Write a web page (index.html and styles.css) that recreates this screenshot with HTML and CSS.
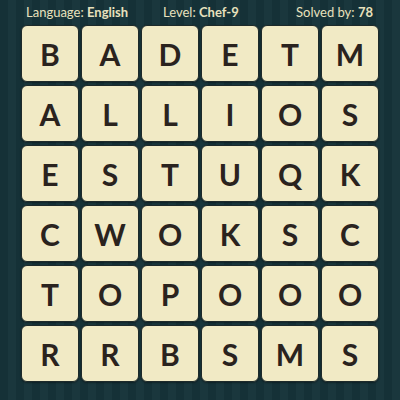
FILE: index.html
```html
<!DOCTYPE html>
<html>
<head>
<meta charset="utf-8">
<link rel="stylesheet" href="styles.css">
</head>
<body>
<div class="page">
  <div class="header">
    <span class="info">Language: <b>English</b></span>
    <span class="info">Level: <b>Chef-9</b></span>
    <span class="info right">Solved by: <b>78</b></span>
  </div>
  <div class="grid">
    <div class="tile">B</div><div class="tile">A</div><div class="tile">D</div><div class="tile">E</div><div class="tile">T</div><div class="tile">M</div>
    <div class="tile">A</div><div class="tile">L</div><div class="tile">L</div><div class="tile">I</div><div class="tile">O</div><div class="tile">S</div>
    <div class="tile">E</div><div class="tile">S</div><div class="tile">T</div><div class="tile">U</div><div class="tile">Q</div><div class="tile">K</div>
    <div class="tile">C</div><div class="tile">W</div><div class="tile">O</div><div class="tile">K</div><div class="tile">S</div><div class="tile">C</div>
    <div class="tile">T</div><div class="tile">O</div><div class="tile">P</div><div class="tile">O</div><div class="tile">O</div><div class="tile">O</div>
    <div class="tile">R</div><div class="tile">R</div><div class="tile">B</div><div class="tile">S</div><div class="tile">M</div><div class="tile">S</div>
  </div>
</div>
</body>
</html>
```
FILE: styles.css
```css
html, body {
  margin: 0;
  padding: 0;
}
body {
  width: 400px;
  height: 400px;
  overflow: hidden;
  background-color: #163238;
  background-image: repeating-linear-gradient(90deg, #153137 0px, #153137 8px, #1a373d 8px, #1a373d 16px);
  font-family: Lato, "Open Sans", sans-serif;
}
.page {
  display: flex;
  flex-direction: column;
}
.header {
  height: 24px;
  display: grid;
  grid-template-columns: 137px 1fr auto;
  align-items: center;
  padding: 0 27px 0 26px;
  color: #e8e1bd;
  font-size: 13px;
}
.info b {
  font-weight: 700;
}
.grid {
  margin: 1px 0 0 21px;
  display: grid;
  grid-template-columns: repeat(6, 58px);
  grid-auto-rows: 57px;
  gap: 2px 2px;
  row-gap: 3px;
}
.tile {
  box-sizing: border-box;
  background: #f1eac5;
  border: 1px solid #1e2a2a;
  border-radius: 6px;
  box-shadow: 0 1px 2px rgba(0, 0, 0, 0.35);
  display: flex;
  align-items: center;
  justify-content: center;
  color: #2a231e;
  font-size: 30px;
  font-weight: 700;
}
```
